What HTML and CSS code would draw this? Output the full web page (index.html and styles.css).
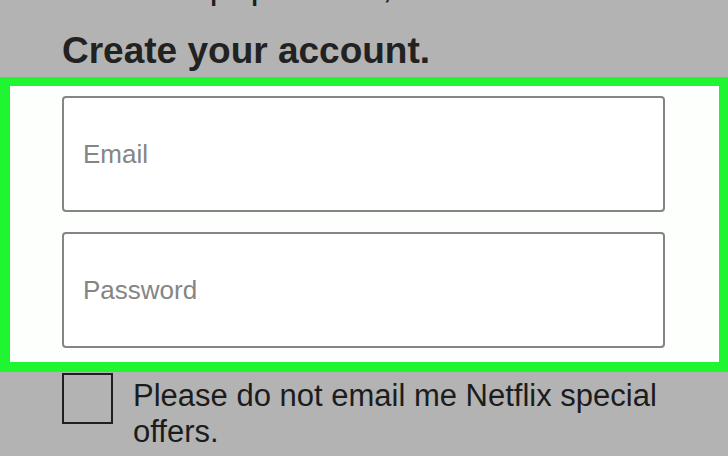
FILE: index.html
```html
<!DOCTYPE html>
<html lang="en">
<head>
<meta charset="utf-8">
<title>Create your account</title>
<link rel="stylesheet" href="styles.css">
</head>
<body>
<div class="page">
  <p class="sub">We hate paperwork, too.</p>
  <h1 class="title">Create your account.</h1>
  <div class="highlight">
    <div class="fields">
      <div class="field"><span class="placeholder">Email</span></div>
      <div class="field"><span class="placeholder">Password</span></div>
    </div>
  </div>
  <div class="optout">
    <span class="checkbox"></span>
    <span class="optout-text">Please do not email me Netflix special offers.</span>
  </div>
</div>
</body>
</html>
```
FILE: styles.css
```css
html, body {
  margin: 0;
  padding: 0;
}
body {
  background: #b3b3b3;
  font-family: "Liberation Sans", Arial, Helvetica, sans-serif;
  color: #1e1e1e;
  width: 728px;
  height: 456px;
  overflow: hidden;
}
.page {
  display: flex;
  flex-direction: column;
}
.sub {
  margin: -34px 0 0 0;
  padding-left: 62px;
  font-size: 37px;
  line-height: 40px;
  white-space: nowrap;
}
.title {
  margin: 23px 0 0 0;
  padding-left: 62px;
  font-size: 37px;
  line-height: 44px;
  font-weight: bold;
  color: #222;
}
.highlight {
  margin-top: 4px;
  border-style: solid;
  border-color: #20f531;
  border-width: 9px 9px 10px 10px;
  background: #fdfffd;
}
.fields {
  display: flex;
  flex-direction: column;
  gap: 20px;
  padding: 10px 54px 14px 52px;
}
.field {
  box-sizing: border-box;
  height: 116px;
  border: 2px solid #858585;
  border-radius: 4px;
  background: #fff;
  display: flex;
  align-items: center;
  padding-left: 19px;
}
.placeholder {
  font-size: 26px;
  color: #858585;
}
.optout {
  display: flex;
  align-items: flex-start;
  gap: 20px;
  padding-left: 62px;
  margin-top: 1px;
}
.checkbox {
  box-sizing: border-box;
  flex: none;
  width: 51px;
  height: 51px;
  border: 2px solid #1f1f1f;
}
.optout-text {
  margin-top: 5px;
  max-width: 560px;
  font-size: 31px;
  line-height: 36px;
  color: #1c1c1c;
}
```
